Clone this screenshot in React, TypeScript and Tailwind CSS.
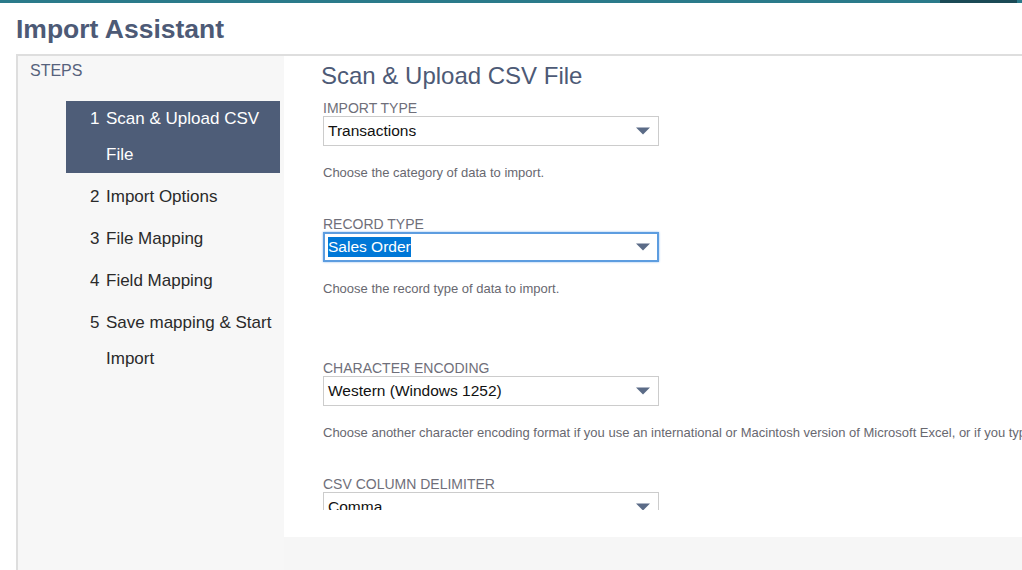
import React from 'react';

interface Field {
  label: string;
  value: string;
  help?: string;
  focused?: boolean;
}

const steps = [
  { n: '1', text: 'Scan & Upload CSV File', active: true },
  { n: '2', text: 'Import Options' },
  { n: '3', text: 'File Mapping' },
  { n: '4', text: 'Field Mapping' },
  { n: '5', text: 'Save mapping & Start Import' },
];

const Arrow = () => (
  <svg width="14" height="8" viewBox="0 0 14 8" className="shrink-0">
    <path d="M0 0.5 L14 0.5 L7 7.5 Z" fill="#5b6b87" />
  </svg>
);

const SelectBox: React.FC<{ value: string; focused?: boolean }> = ({ value, focused }) => (
  <div
    className={
      focused
        ? 'flex h-[30px] w-[336px] items-center justify-between border-2 border-[#5d9de0] bg-white pl-[3px] pr-[7px] shadow-[0_0_2px_#8cbcf0]'
        : 'flex h-[30px] w-[336px] items-center justify-between border border-[#cccccc] bg-white pl-[4px] pr-[8px]'
    }
  >
    <span
      className={
        focused
          ? 'bg-[#0078d7] text-[15.5px] leading-[20px] text-white'
          : 'text-[15.5px] leading-[20px] text-[#111]'
      }
    >
      {value}
    </span>
    <Arrow />
  </div>
);

const FieldBlock: React.FC<{ field: Field; className?: string }> = ({ field, className }) => (
  <div className={className}>
    <div className="h-4 text-[14px] uppercase leading-4 text-[#6f6f7a]">{field.label}</div>
    <SelectBox value={field.value} focused={field.focused} />
    {field.help && (
      <div className="mt-5 whitespace-nowrap text-[13px] leading-[14px] text-[#686870]">{field.help}</div>
    )}
  </div>
);

export default function App() {
  return (
    <div
      className="h-[570px] w-screen overflow-hidden bg-white"
      style={{ fontFamily: '"Liberation Sans", Arial, sans-serif' }}
    >
      {/* top bar */}
      <div className="flex h-[3px]">
        <div className="w-[940px] bg-[#2a7a8a]" />
        <div className="w-[77px] bg-[#1b4a56]" />
        <div className="flex-1 bg-[#2a7a8a]" />
      </div>

      <h1 className="ml-4 pt-[10px] text-[26.5px] font-bold leading-[32px] text-[#4d5a76]">Import Assistant</h1>

      <div className="ml-4 mt-[9px] flex h-[516px] border-l-2 border-t-2 border-[#dedede] bg-[#f6f6f6]">
        {/* steps sidebar */}
        <div className="w-[266px] shrink-0 bg-[#f7f7f7] pt-[5px]">
          <div className="pl-3 text-[16px] leading-5 text-[#56627c]">STEPS</div>
          <div className="ml-12 mr-1 mt-5 flex flex-col gap-[6px]">
            {steps.map((s) => (
              <div
                key={s.n}
                className={
                  s.active
                    ? 'flex bg-[#4e5d78] pl-6 text-[17px] leading-[36px] text-white'
                    : 'flex pl-6 text-[17px] leading-[36px] text-[#2a2a2a]'
                }
              >
                <span className="w-4 shrink-0">{s.n}</span>
                <span>{s.text}</span>
              </div>
            ))}
          </div>
        </div>

        {/* main panel */}
        <div className="h-[481px] flex-1 bg-white">
          <div className="h-[454px] overflow-hidden">
            <h2 className="pl-[37px] pt-[6px] text-[24px] leading-[28px] text-[#4d5a76]">Scan &amp; Upload CSV File</h2>
            <div className="pl-[39px] pt-[10px]">
              <FieldBlock
                field={{
                  label: 'Import Type',
                  value: 'Transactions',
                  help: 'Choose the category of data to import.',
                }}
              />
              <FieldBlock
                className="mt-9"
                field={{
                  label: 'Record Type',
                  value: 'Sales Order',
                  help: 'Choose the record type of data to import.',
                  focused: true,
                }}
              />
              <FieldBlock
                className="mt-16"
                field={{
                  label: 'Character Encoding',
                  value: 'Western (Windows 1252)',
                  help: 'Choose another character encoding format if you use an international or Macintosh version of Microsoft Excel, or if you type data in a language other than English.',
                }}
              />
              <FieldBlock className="mt-9" field={{ label: 'CSV Column Delimiter', value: 'Comma' }} />
            </div>
          </div>
        </div>
      </div>
    </div>
  );
}
